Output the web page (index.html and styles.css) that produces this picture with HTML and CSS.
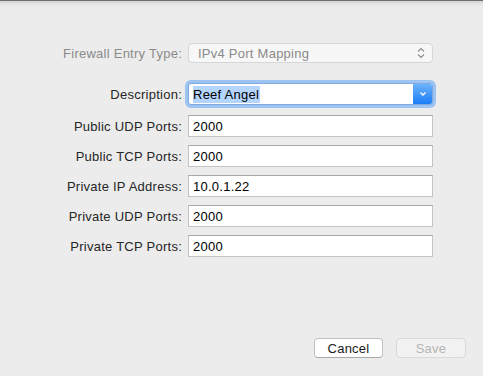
FILE: index.html
```html
<!DOCTYPE html>
<html lang="en">

<head>
  <meta charset="UTF-8">
  <meta name="viewport" content="width=device-width, initial-scale=1.0">
  <title>Firewall Entry</title>
  <link rel="stylesheet" href="styles.css">
</head>

<body>

  <div class="sheet">
    <div class="form">
      <div class="row row-type">
        <label class="disabled">Firewall Entry Type:</label>
        <div class="popup">
          <span>IPv4 Port Mapping</span>
          <svg class="updown" width="8" height="12" viewBox="0 0 8 12">
            <path d="M1 4.5 L4 1.5 L7 4.5 M1 7.5 L4 10.5 L7 7.5" fill="none" stroke="#8a8a8a" stroke-width="1.1" />
          </svg>
        </div>
      </div>

      <div class="row row-desc">
        <label for="descInput">Description:</label>
        <div class="combo">
          <div class="combo-text"><span class="selected">Reef Angel</span></div>
          <div class="combo-btn">
            <svg width="8" height="6" viewBox="0 0 8 6">
              <path d="M1.5 1.5 L4 4 L6.5 1.5" fill="none" stroke="#fff" stroke-width="1.4" />
            </svg>
          </div>
        </div>
      </div>

      <div class="row">
        <label>Public UDP Ports:</label>
        <div class="field">2000</div>
      </div>
      <div class="row">
        <label>Public TCP Ports:</label>
        <div class="field">2000</div>
      </div>
      <div class="row">
        <label>Private IP Address:</label>
        <div class="field">10.0.1.22</div>
      </div>
      <div class="row">
        <label>Private UDP Ports:</label>
        <div class="field">2000</div>
      </div>
      <div class="row">
        <label>Private TCP Ports:</label>
        <div class="field">2000</div>
      </div>
    </div>

    <div class="actions">
      <button class="btn">Cancel</button>
      <button class="btn btn-disabled">Save</button>
    </div>
  </div>

</body>

</html>
```
FILE: styles.css
```css
* {
  box-sizing: border-box;
  font-family: "Liberation Sans", Arial, sans-serif;
}

body {
  margin: 0;
  padding: 0;
  background-color: #ececec;
}

.sheet {
  height: 376px;
  display: flex;
  flex-direction: column;
  border-top: 1px solid #6e6e6e;
  background: linear-gradient(#d2d2d2, #e4e4e4 3px, #ececec 6px, #ececec);
}

.form {
  display: flex;
  flex-direction: column;
  gap: 8px;
  padding-top: 42px;
}

.row {
  display: flex;
  align-items: center;
  height: 22px;
}

.row label {
  width: 183px;
  padding-right: 1px;
  text-align: right;
  font-size: 13px;
  color: #262626;
  letter-spacing: 0.25px;
}

.row label.disabled {
  color: #8a8a8a;
}

.row-type {
  height: 20px;
  margin-bottom: 12px;
}

.row-desc {
  margin-bottom: 2px;
}

.popup {
  margin-left: 5px;
  width: 245px;
  height: 20px;
  display: flex;
  align-items: center;
  justify-content: space-between;
  padding: 0 7px 0 9px;
  border: 1px solid #d6d6d6;
  border-radius: 4px;
  background-color: #f7f7f7;
  font-size: 13px;
  color: #8a8a8a;
  letter-spacing: 0.25px;
}

.combo {
  margin-left: 5px;
  width: 245px;
  height: 22px;
  display: flex;
  border: 1px solid #7fa9e0;
  border-radius: 3px;
  box-shadow: 0 0 0 3px #9cc3f2;
  background-color: white;
}

.combo-text {
  flex: 1;
  display: flex;
  align-items: center;
  padding-left: 4px;
  font-size: 13px;
  color: #000;
  letter-spacing: 0.25px;
}

.selected {
  background-color: #b4d5fd;
  padding: 1px 1px 1px 0;
}

.combo-btn {
  width: 19px;
  display: flex;
  align-items: center;
  justify-content: center;
  background: linear-gradient(#6cb3fb, #1b7df5);
  border-radius: 0 2px 2px 0;
}

.field {
  margin-left: 5px;
  width: 245px;
  height: 22px;
  display: flex;
  align-items: center;
  padding-left: 4px;
  background-color: white;
  border: 1px solid #c4c4c4;
  border-top-color: #a8a8a8;
  font-size: 13px;
  color: #000;
  letter-spacing: 0.25px;
}

.actions {
  margin-top: auto;
  display: flex;
  justify-content: flex-end;
  gap: 13px;
  padding: 0 17px 18px 0;
}

.btn {
  width: 69px;
  height: 20px;
  padding: 0;
  font-size: 13px;
  color: #1a1a1a;
  background-color: #fff;
  border: 1px solid #c2c2c2;
  border-bottom-color: #a9a9a9;
  border-radius: 4px;
  letter-spacing: 0.25px;
}

.btn-disabled {
  width: 70px;
  color: #b4b4b4;
  background-color: #f2f2f2;
  border-color: #d9d9d9;
}
```
